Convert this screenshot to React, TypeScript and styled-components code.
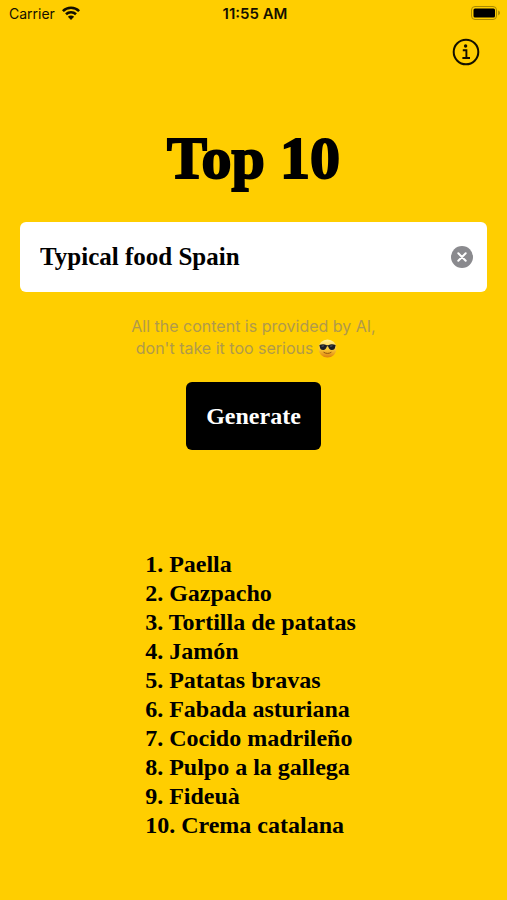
import React, { useState } from 'react'
import styled, { createGlobalStyle } from 'styled-components'

const results = [
    'Paella',
    'Gazpacho',
    'Tortilla de patatas',
    'Jamón',
    'Patatas bravas',
    'Fabada asturiana',
    'Cocido madrileño',
    'Pulpo a la gallega',
    'Fideuà',
    'Crema catalana',
]

function WifiIcon() {
    return (
        <svg width="20" height="16" viewBox="0 0 20 16" fill="none" stroke="#141000" strokeWidth="2.6">
            <path d="M1.9 6.1a11.6 11.6 0 0 1 16.2 0" />
            <path d="M5 9.3a7.2 7.2 0 0 1 10 0" />
            <path d="M10 15 6.9 11.8a4.4 4.4 0 0 1 6.2 0z" fill="#141000" stroke="none" />
        </svg>
    )
}

function BatteryIcon() {
    return (
        <svg width="30" height="14" viewBox="0 0 30 14">
            <rect x="0.5" y="0.5" width="25" height="13" rx="3.5" fill="none" stroke="#a98a00" />
            <rect x="2.5" y="2.5" width="21.5" height="9" rx="1.5" fill="#000" />
            <path d="M27.2 4.6c2.4.9 2.4 3.9 0 4.8z" fill="#a98a00" />
        </svg>
    )
}

function InfoIcon() {
    return (
        <svg width="28" height="28" viewBox="0 0 28 28" fill="none" stroke="#141000">
            <circle cx="14" cy="14" r="12.3" strokeWidth="2" />
            <circle cx="13.6" cy="8" r="1.7" fill="#141000" stroke="none" />
            <path d="M10.8 12.2h3.6v7.6M10.4 20h7.6" strokeWidth="1.9" />
        </svg>
    )
}

function ClearIcon() {
    return (
        <svg width="22" height="22" viewBox="0 0 22 22">
            <circle cx="11" cy="11" r="11" fill="#8a8a8e" />
            <path d="m7.3 7.3 7.4 7.4m0-7.4-7.4 7.4" stroke="#fff" strokeWidth="2" strokeLinecap="round" />
        </svg>
    )
}

function CoolFace() {
    return (
        <FaceSvg width="19" height="19" viewBox="0 0 20 20" role="img" aria-label="cool">
            <defs>
                <linearGradient id="face" x1="0" y1="0" x2="0" y2="1">
                    <stop offset="0" stopColor="#fff29a" />
                    <stop offset="0.55" stopColor="#fbc932" />
                    <stop offset="1" stopColor="#dd8010" />
                </linearGradient>
            </defs>
            <circle cx="10" cy="10" r="9.5" fill="url(#face)" />
            <path
                d="M1.4 6.2c3-.9 5.600-.8 7.200.1.9.4 1.900.4 2.800 0 1.600-.9 4.200-1 7.200-.1l-.3 1.300c-.4 3.100-1.500 4-3.700 4-2.200 0-3.200-1.200-3.800-3.300-.3-.6-1.300-.6-1.600 0-.6 2.100-1.600 3.300-3.800 3.300-2.200 0-3.300-.9-3.700-4z"
                fill="#1b1d22"
            />
            <path d="m3.8 7.600 2.400-.4m6.600.4 2.400-.4" stroke="#66727c" strokeWidth="0.9" />
            <path d="M6.200 14.100c2.300 1.500 5.300 1.500 7.600 0" stroke="#8f540c" fill="none" strokeLinecap="round" />
        </FaceSvg>
    )
}

export default function App() {
    const [topic, setTopic] = useState('Typical food Spain')

    return (
        <Screen>
            <GlobalStyle />
            <StatusBar>
                <Carrier>
                    Carrier <WifiIcon />
                </Carrier>
                <Time>11:55 AM</Time>
                <Battery>
                    <BatteryIcon />
                </Battery>
            </StatusBar>
            <Toolbar>
                <IconButton type="button" aria-label="Info">
                    <InfoIcon />
                </IconButton>
            </Toolbar>
            <Title>Top 10</Title>
            <SearchField>
                <SearchInput aria-label="Topic" value={topic} onChange={(e) => setTopic(e.target.value)} />
                <IconButton type="button" aria-label="Clear" onClick={() => setTopic('')}>
                    <ClearIcon />
                </IconButton>
            </SearchField>
            <Disclaimer>
                {"All the content is provided by AI,\n don't take it too serious "}
                <CoolFace />
            </Disclaimer>
            <GenerateButton type="button">Generate</GenerateButton>
            <Results>
                {results.map((name, i) => (
                    <li key={name}>
                        {i + 1}. {name}
                    </li>
                ))}
            </Results>
        </Screen>
    )
}

const GlobalStyle = createGlobalStyle`
    * {
        box-sizing: border-box;
    }

    body {
        margin: 0;
        background: #ffce00;
        color: #000;
        font-family: Inter, sans-serif;
    }

    button, input {
        border: 0;
        padding: 0;
        background: none;
    }
`
const Screen = styled.main`
    display: flex;
    flex-direction: column;
    align-items: center;
    min-height: 100vh;
    padding-bottom: 40px;
`
const StatusBar = styled.header`
    display: grid;
    grid-template-columns: 1fr auto 1fr;
    align-items: center;
    width: 100%;
    height: 26px;
    padding: 0 6px 0 9px;
    font-size: 14px;
    color: #141000;
`
const Carrier = styled.div`
    display: flex;
    align-items: center;
    gap: 6px;
`
const Time = styled.div`
    font-size: 15px;
    font-weight: 600;
`
const Battery = styled.div`
    display: flex;
    justify-content: flex-end;
`
const Toolbar = styled.nav`
    display: flex;
    justify-content: flex-end;
    width: 100%;
    padding: 12px 27px 0;
`
const IconButton = styled.button`
    display: flex;
    cursor: pointer;
`
const Title = styled.h1`
    margin: 58px 0 30px;
    font: bold 60px/68px 'Liberation Serif', serif;
    -webkit-text-stroke: 2px #000;
`
const SearchField = styled.div`
    display: flex;
    align-items: center;
    width: calc(100% - 40px);
    height: 70px;
    padding: 0 14px 0 20px;
    border-radius: 6px;
    background: #fff;
`
const SearchInput = styled.input`
    flex: 1;
    min-width: 0;
    font: bold 25px/32px 'Liberation Serif', serif;
    color: #000;
    outline: none;
`
const Disclaimer = styled.p`
    margin: 23px 0;
    font-size: 16px;
    line-height: 22px;
    white-space: pre;
    color: #b19a4a;
`
const FaceSvg = styled.svg`
    vertical-align: -4px;
`
const GenerateButton = styled.button`
    height: 68px;
    padding: 0 20px;
    border-radius: 6px;
    background: #000;
    color: #fff;
    font: bold 24px/32px 'Liberation Serif', serif;
    cursor: pointer;
`
const Results = styled.ol`
    margin: 100px 0 0;
    padding: 0 6px 0 0;
    list-style: none;
    font: bold 24px/29px 'Liberation Serif', serif;
`
